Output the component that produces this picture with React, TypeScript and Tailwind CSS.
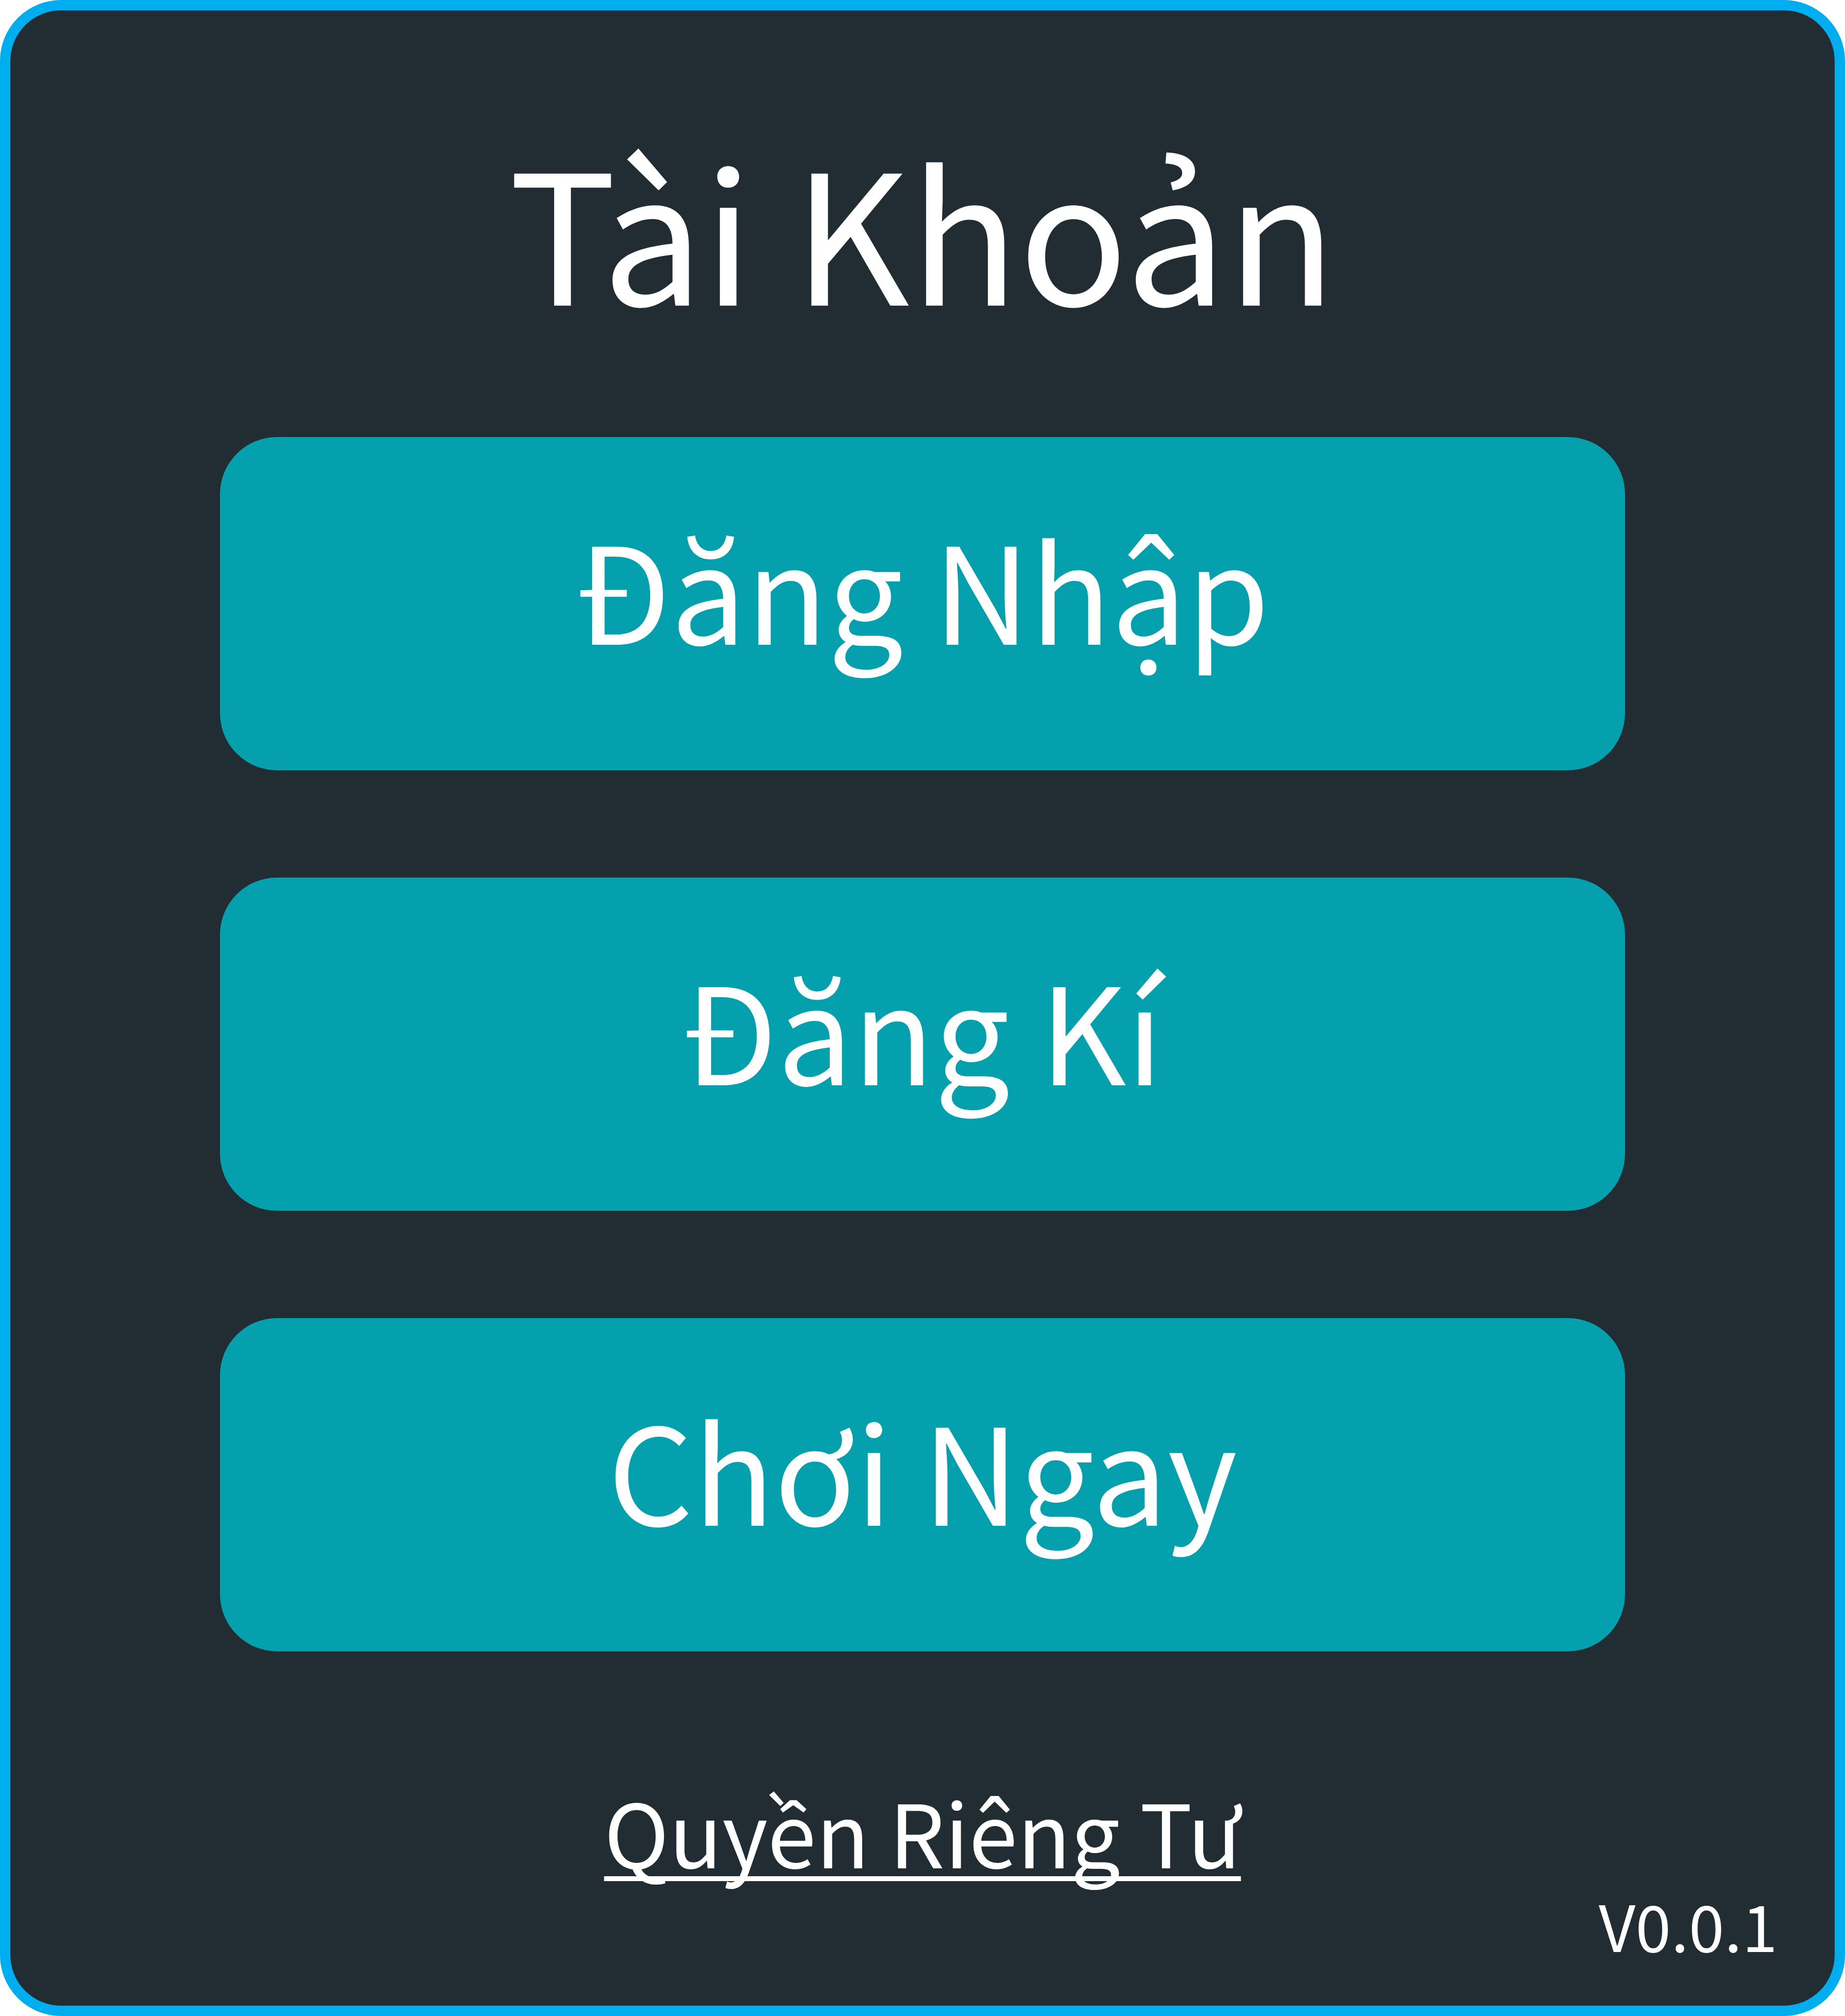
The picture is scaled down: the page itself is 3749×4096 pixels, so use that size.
const actions = ['Đăng Nhập', 'Đăng Kí', 'Chơi Ngay'];

export default function App() {
  return (
    <main className="flex min-h-screen w-full flex-col items-center rounded-[124px] border-[21px] border-[#00adef] bg-[#222c33] font-['Noto_Sans_CJK_SC','Noto_Sans',sans-serif] text-white">
      <h1 className="mt-[200px] text-[366px] leading-[480px]">Tài Khoản</h1>
      <div className="mt-[187px] flex w-[77%] flex-col gap-[218px]">
        {actions.map((label) => (
          <button key={label} type="button" className="h-[677px] rounded-[116px] bg-[#04a0ad] pb-[72px] text-[272px] leading-[400px]">
            {label}
          </button>
        ))}
      </div>
      <a href="#privacy" className="mt-[234px] text-[178px] leading-[260px] underline decoration-[10px] underline-offset-[16px] [text-decoration-skip-ink:none]">
        Quyền Riêng Tư
      </a>
      <p className="mr-[116px] self-end text-[130px] leading-[120px]">V0.0.1</p>
    </main>
  );
}
